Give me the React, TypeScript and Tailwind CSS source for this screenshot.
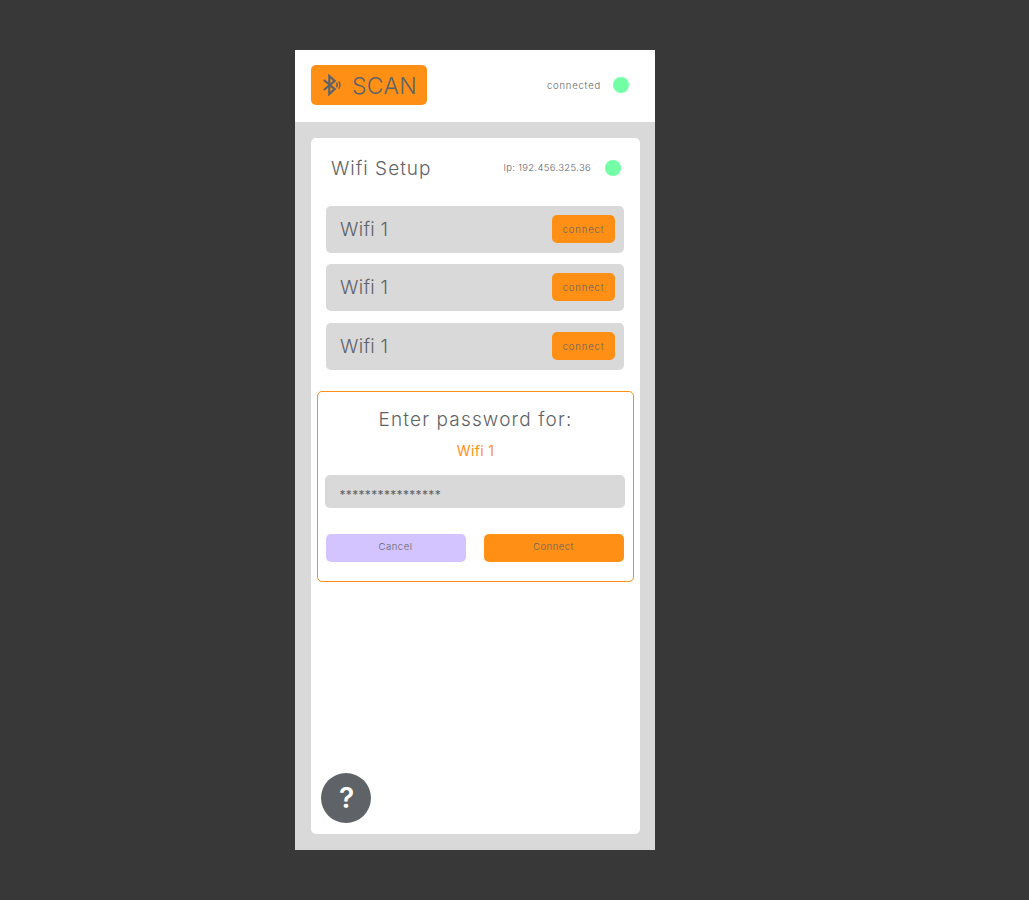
import React from "react";

const font = "font-['Inter','Noto_Sans',sans-serif]";

function BluetoothIcon() {
  return (
    <svg width="20" height="22" viewBox="0 0 22 24" fill="none" stroke="#5f6368" strokeWidth="2.4">
      <path d="M2 6.5 L14 16.5 L8 22 V2 L14 7.5 L2 17.5" strokeLinejoin="miter" />
      <path d="M16 9.5 Q17.5 12 16 14.5" strokeWidth="1.8" />
      <path d="M18.5 8 Q21 12 18.5 16" strokeWidth="1.6" />
    </svg>
  );
}

function WifiRow({ className }: { className?: string }) {
  return (
    <div className={`h-[47px] w-[298px] ml-[15px] rounded-[5px] bg-[#d9d9d9] flex items-center justify-between pl-[14px] pr-[9px] ${className ?? ""}`}>
      <span className="pt-[1px] text-[19px] font-light tracking-[0.3px] text-[#5f6368]">Wifi 1</span>
      <button className="mb-[1px] pt-[2px] h-[28px] w-[63px] rounded-[5px] bg-[#ff9015] text-[9.5px] font-light tracking-[0.85px] text-[#5f6368]">connect</button>
    </div>
  );
}

export default function App() {
  return (
    <div className={`min-h-[900px] bg-[#383838] pt-[50px] pl-[295px] ${font}`}>
      <div className="w-[360px] h-[800px] bg-[#d9d9d9] flex flex-col">
        <header className="h-[72px] bg-white flex items-center justify-between pl-4 pr-[26px] pb-[2px]">
          <button className="h-[40px] w-[116px] rounded-[5px] bg-[#ff9015] flex items-center pl-[11px] gap-[10px]">
            <BluetoothIcon />
            <span className="pt-[2px] text-[23px] font-light tracking-[0.3px] text-[#5f6368]">SCAN</span>
          </button>
          <div className="flex items-center gap-[12px]">
            <span className="pt-[2px] text-[9.5px] font-light tracking-[0.8px] text-[#5f6368]">connected</span>
            <span className="w-4 h-4 rounded-full bg-[#73ffa6]" />
          </div>
        </header>

        <main className="mt-4 ml-4 w-[329px] h-[696px] rounded-[5px] bg-white flex flex-col">
          <div className="h-[60px] flex items-center justify-between pl-5 pr-[19px]">
            <h1 className="pt-[2px] text-[19px] font-light tracking-[1px] text-[#5f6368]">Wifi Setup</h1>
            <div className="flex items-center gap-[14px]">
              <span className="pt-[1px] text-[9.5px] font-light tracking-[0.32px] text-[#5f6368]">Ip: 192.456.325.36</span>
              <span className="w-4 h-4 rounded-full bg-[#73ffa6]" />
            </div>
          </div>

          <WifiRow className="mt-[8px]" />
          <WifiRow className="mt-[11px]" />
          <WifiRow className="mt-[12px]" />

          <section className="mt-[21px] ml-[6px] w-[317px] h-[191px] rounded-[5px] border border-[#ff9015] flex flex-col items-center">
            <h2 className="mt-[15px] text-[19px] leading-[26px] font-light tracking-[1.15px] text-[#5f6368]">Enter password for:</h2>
            <p className="mt-[8px] text-[14px] leading-[20px] font-normal tracking-[0.35px] text-[#ff9015]">Wifi 1</p>
            <div className="mt-[14px] h-[33px] w-[300px] mr-[2px] rounded-[5px] bg-[#d9d9d9] flex items-center pl-[15px] pt-[7px] text-[12px] tracking-[0.33px] text-[#5f6368]">
              ****************
            </div>
            <div className="mt-[26px] w-[298px] mr-[2px] flex justify-between">
              <button className="h-[28px] w-[140px] rounded-[5px] bg-[#d3c3ff] pb-[2px] text-[9.5px] font-light tracking-[0.5px] text-[#5f6368]">Cancel</button>
              <button className="h-[28px] w-[140px] rounded-[5px] bg-[#ff9015] pb-[2px] text-[9.5px] font-light tracking-[0.5px] text-[#5f6368]">Connect</button>
            </div>
          </section>

          <button className="mt-auto mb-[11px] ml-[10px] pl-[1px] w-[50px] h-[50px] rounded-full bg-[#5f6368] text-white text-[28px] font-semibold font-['Inter',sans-serif] flex items-center justify-center">?</button>
        </main>
      </div>
    </div>
  );
}
